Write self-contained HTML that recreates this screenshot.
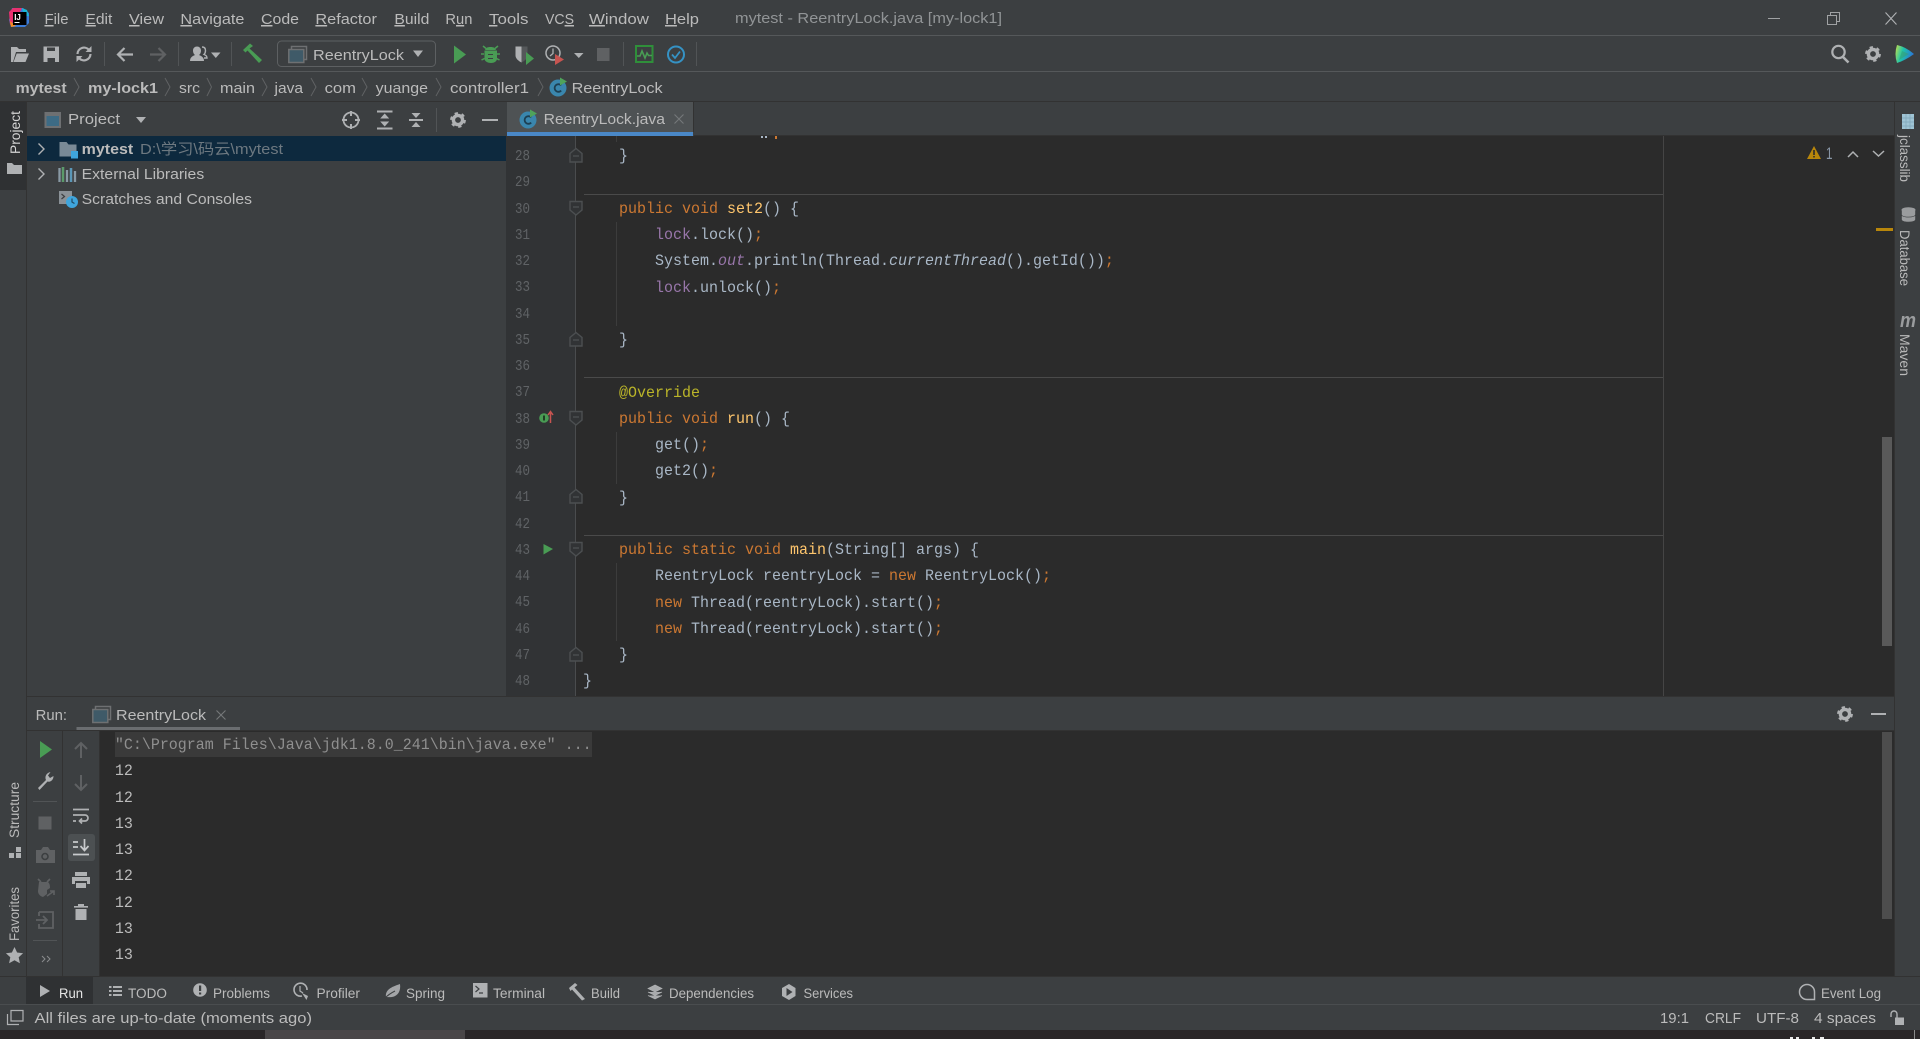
<!DOCTYPE html>
<html><head><meta charset="utf-8"><title>mytest - ReentryLock.java [my-lock1]</title>
<style>
html,body{margin:0;padding:0;background:#3c3f41;overflow:hidden}
svg{display:block}
text{font-family:"Liberation Sans","Noto Sans CJK SC",sans-serif;font-size:15px;fill:#bbbbbb;white-space:pre}
.s13{font-size:13.5px}
.b{font-weight:bold}
.u{text-decoration:underline}
.m text,text.m{font-family:"Liberation Mono",monospace;font-size:16px;fill:#a9b7c6}
.k{fill:#cc7832}.f{fill:#9876aa}.y{fill:#ffc66d}.a{fill:#bbb529}.i{font-style:italic}
.ln text{font-family:"Liberation Mono",monospace;font-size:15px;fill:#606366}
.con text{font-family:"Liberation Mono",monospace;font-size:16px;fill:#bbbbbb}
</style></head><body>
<svg xmlns="http://www.w3.org/2000/svg" width="1920" height="1039" viewBox="0 0 1920 1039">
<defs>
<g id="gear"><circle r="4.6" fill="none" stroke="#afb1b3" stroke-width="3.4"/><circle r="6.6" fill="none" stroke="#afb1b3" stroke-width="2.6" stroke-dasharray="3.2 3.71"/></g>
<g id="cls"><circle r="8.5" fill="#3a86ad"/><path d="M3.2-2.6A3.8 3.8 0 1 0 3.2 2.6" fill="none" stroke="#1d3f52" stroke-width="1.8"/><path d="M2-10.5L9-6.5L2-2.5Z" fill="#4fa35a"/></g>
<g id="cfg"><rect x="3.5" y="-8.5" width="15" height="13" fill="none" stroke="#6e7072" stroke-width="1.5"/><rect x="0.8" y="-5.5" width="15" height="13" fill="#3f5a68" stroke="#6e7072" stroke-width="1.5"/></g>
<path id="fu" d="M-6 7V-1.5L0-6.5L6-1.5V7Z" fill="#313335" stroke="#4c4f51" stroke-width="1.4"/>
<path id="fd" d="M-6-6.5V2L0 7L6 2V-6.5Z" fill="#313335" stroke="#4c4f51" stroke-width="1.4"/>
<linearGradient id="tb" x1="0" y1="0" x2="1" y2="0.3"><stop offset="0" stop-color="#c9e04a"/><stop offset=".45" stop-color="#1fc4a8"/><stop offset="1" stop-color="#2a7ad6"/></linearGradient>
</defs>

<rect width="1920" height="1039" fill="#3c3f41"/>
<!-- chrome lines -->
<rect y="35" width="1920" height="1" fill="#55585a"/>
<rect y="71" width="1920" height="1" fill="#55585a"/>
<rect y="101" width="1920" height="1" fill="#323232"/>

<!-- logo -->
<path d="M12 8L23 8L29 13L29 23L25 27L11 27L9 20Z" fill="#3b7bd8"/>
<path d="M9 12L13 8L22 8L16 20L10 25Z" fill="#e8316f"/>
<path d="M22 8L27 10L29 16L24 16Z" fill="#19b6d6"/>
<path d="M10 21L16 26L11 27Z" fill="#f58a1f"/>
<rect x="13" y="12" width="13.5" height="13" fill="#000"/>
<text x="14.2" y="20" style="font-size:8px;font-weight:bold;fill:#fff">IJ</text>
<rect x="14.5" y="22" width="5" height="1" fill="#fff"/>

<!-- menu -->
<g>
<text x="44.5" y="24" textLength="24" lengthAdjust="spacingAndGlyphs"><tspan class="u">F</tspan>ile</text>
<text x="85.4" y="24" textLength="27" lengthAdjust="spacingAndGlyphs"><tspan class="u">E</tspan>dit</text>
<text x="129" y="24" textLength="35" lengthAdjust="spacingAndGlyphs"><tspan class="u">V</tspan>iew</text>
<text x="180.4" y="24" textLength="64" lengthAdjust="spacingAndGlyphs"><tspan class="u">N</tspan>avigate</text>
<text x="261" y="24" textLength="38" lengthAdjust="spacingAndGlyphs"><tspan class="u">C</tspan>ode</text>
<text x="315.4" y="24" textLength="61.5" lengthAdjust="spacingAndGlyphs"><tspan class="u">R</tspan>efactor</text>
<text x="394.4" y="24" textLength="35" lengthAdjust="spacingAndGlyphs"><tspan class="u">B</tspan>uild</text>
<text x="445.4" y="24" textLength="27" lengthAdjust="spacingAndGlyphs">R<tspan class="u">u</tspan>n</text>
<text x="489" y="24" textLength="39.5" lengthAdjust="spacingAndGlyphs"><tspan class="u">T</tspan>ools</text>
<text x="545" y="24" textLength="29" lengthAdjust="spacingAndGlyphs">VC<tspan class="u">S</tspan></text>
<text x="589" y="24" textLength="60" lengthAdjust="spacingAndGlyphs"><tspan class="u">W</tspan>indow</text>
<text x="665" y="24" textLength="34" lengthAdjust="spacingAndGlyphs"><tspan class="u">H</tspan>elp</text>
<text x="735" y="23" textLength="267" lengthAdjust="spacingAndGlyphs" style="fill:#919496">mytest - ReentryLock.java [my-lock1]</text>
</g>
<!-- window buttons -->
<rect x="1768" y="18" width="12" height="1" fill="#a0a2a4"/>
<path d="M1827.5 15.5h9v9h-9zM1830.5 15.5v-3h9v9h-3" fill="none" stroke="#a0a2a4"/>
<path d="M1885.5 12.5l11 12M1896.5 12.5l-11 12" stroke="#b0b2b4" stroke-width="1.1" fill="none"/>

<!-- toolbar -->
<path d="M11 62V47h6l2 2h7v3H16l-3 10zM13.5 62l3.2-8.5H29L25.5 62z" fill="#afb1b3"/>
<path d="M43.5 46.5h15.5v15.5h-15.5z" fill="#afb1b3"/>
<path d="M47 47.500h8v3.500h-8zM47.500 58h7.500v4h-7.500z" fill="#3c3f41"/>
<path d="M77.500 54a6.500 6.500 0 0 1 11.500-4M90.500 54a6.500 6.500 0 0 1-11.500 4" fill="none" stroke="#afb1b3" stroke-width="2.200"/>
<path d="M91.500 46v6h-6zM76.500 62v-6h6z" fill="#afb1b3"/>
<rect x="104" y="42" width="1" height="24" fill="#515456"/>
<path d="M133 54.500h-14M124.500 48l-6.500 6.500l6.500 6.500" fill="none" stroke="#afb1b3" stroke-width="2.200"/>
<path d="M150 54.500h14M158.500 48l6.500 6.500l-6.500 6.500" fill="none" stroke="#5f6163" stroke-width="2.200"/>
<rect x="178" y="42" width="1" height="24" fill="#515456"/>
<path d="M190 61c0-4 3-5 5-6c-1.500-1-2-3-2-4.500c0-2.500 1.800-4 4-4s4 1.500 4 4c0 1.500-.5 3.500-2 4.500c2 1 5 2 5 6z" fill="#afb1b3"/>
<path d="M202 47c2.500 0 3.500 1.500 3.500 3.500c0 1.500-.5 3-1.500 4c1.500.5 3 1.500 3 3.500h-3" fill="none" stroke="#afb1b3" stroke-width="1.400"/>
<path d="M211 52.500h9.500l-4.700 5.500z" fill="#afb1b3"/>
<rect x="231" y="42" width="1" height="24" fill="#515456"/>
<path d="M243 50l7-6.500l3 2.500l-3.500 2.500L262 60l-3 3L247.500 50.500l-2 2z" fill="#499c54"/>
<rect x="277.500" y="41" width="158" height="25.500" rx="4" fill="none" stroke="#5d6062"/>
<use href="#cfg" x="288" y="55"/>
<text x="313" y="60" textLength="91" lengthAdjust="spacingAndGlyphs">ReentryLock</text>
<path d="M413 50.500h10l-5 6.500z" fill="#afb1b3"/>
<path d="M454 45.500L466 54.500L454 63.500z" fill="#499c54"/>
<g fill="#499c54"><path d="M485 50c1-2 2-3 5.500-3s4.500 1 5.500 3zM484.500 50.500h12.500v8c0 3-3 4.500-6 4.500s-6.500-1.500-6.500-4.500z"/><path d="M483 46l3 2.500M498 46l-3 2.500M481 54h3M497 54h3M481.500 60l3-1.500M499.500 60l-3-1.500" stroke="#499c54" stroke-width="1.500"/><rect x="488" y="54" width="5" height="1" fill="#3c3f41"/><rect x="488" y="58" width="5" height="1" fill="#3c3f41"/></g>
<path d="M515.500 46.500h6v16c-3-1.500-6-4-6-7z" fill="#afb1b3"/><path d="M521.500 46.500h6v9c0 3-3 5.500-6 7z" fill="#55585a"/>
<path d="M526 52L534 58.500L526 65z" fill="#499c54"/>
<circle cx="553" cy="53" r="7" fill="none" stroke="#afb1b3" stroke-width="1.500"/><path d="M553 48.500v5l-3 2.500" fill="none" stroke="#afb1b3" stroke-width="1.300"/>
<path d="M555 54L564 59.500L555 65z" fill="#c75450"/>
<path d="M574 53h9.500l-4.700 5z" fill="#afb1b3"/>
<rect x="597" y="48" width="12.500" height="13" fill="#5f6163"/>
<rect x="623" y="42" width="1" height="24" fill="#515456"/>
<rect x="636" y="46" width="16.500" height="16" fill="none" stroke="#2f8f3a" stroke-width="2"/>
<path d="M637 56h3l2-5l3 7l2-5l1.500 2.500H652" fill="none" stroke="#499c54" stroke-width="1.600"/>
<circle cx="676" cy="54.500" r="8" fill="none" stroke="#3592c4" stroke-width="2"/>
<path d="M672 54.500l3 3.500l5-6.500" fill="none" stroke="#3592c4" stroke-width="1.800"/>
<rect x="696" y="42" width="1" height="24" fill="#515456"/>
<circle cx="1838.500" cy="52" r="6.200" fill="none" stroke="#afb1b3" stroke-width="2.200"/>
<path d="M1843 57l5.500 5.500" stroke="#afb1b3" stroke-width="2.600"/>
<use href="#gear" x="1873" y="54"/>
<path d="M1897 45Q1906 47 1914 54Q1906 60 1897 63Q1894 54 1897 45Z" fill="url(#tb)"/>
<path d="M1902 51L1909 54L1899 60Z" fill="#3c9a6a" opacity=".5"/>

<!-- breadcrumbs -->
<g>
<text class="b" x="15.600" y="93" textLength="51" lengthAdjust="spacingAndGlyphs">mytest</text>
<text class="b" x="88" y="93" textLength="70" lengthAdjust="spacingAndGlyphs">my-lock1</text>
<text x="179" y="93" textLength="21" lengthAdjust="spacingAndGlyphs">src</text>
<text x="220" y="93" textLength="35" lengthAdjust="spacingAndGlyphs">main</text>
<text x="274.500" y="93" textLength="28.500" lengthAdjust="spacingAndGlyphs">java</text>
<text x="324.600" y="93" textLength="31.400" lengthAdjust="spacingAndGlyphs">com</text>
<text x="375.600" y="93" textLength="52.400" lengthAdjust="spacingAndGlyphs">yuange</text>
<text x="450" y="93" textLength="79" lengthAdjust="spacingAndGlyphs">controller1</text>
<text x="571.600" y="93" textLength="91" lengthAdjust="spacingAndGlyphs">ReentryLock</text>
</g>
<g fill="none" stroke="#606264" stroke-width="1">
<path d="M74 78l5 9l-5 9M165 78l5 9l-5 9M207 78l4.500 9l-4.500 9M262 78l5 9l-5 9M311 78l5 9l-5 9M362 78l5 9l-5 9M436 78l5 9l-5 9M538 78l5 9l-5 9"/>
</g>
<use href="#cls" x="558" y="88"/>

<!-- left strip -->
<rect x="26" y="102" width="1" height="874" fill="#323232"/>
<rect y="102" width="26" height="88" fill="#2f3133"/>
<text class="s13" transform="translate(20,154) rotate(-90)" textLength="43" lengthAdjust="spacingAndGlyphs" style="fill:#d4d4d4">Project</text>
<path d="M7 174V163h5l2 2h8v9z" fill="#afb1b3"/>
<text class="s13" transform="translate(19,838) rotate(-90)" textLength="56" lengthAdjust="spacingAndGlyphs">Structure</text>
<path d="M9 853h5v5H9zM16 853h5v5h-5zM16 847h5v5h-5z" fill="#afb1b3"/>
<text class="s13" transform="translate(19,941) rotate(-90)" textLength="54" lengthAdjust="spacingAndGlyphs">Favorites</text>
<path d="M14.500 947l2.600 5.500l6 .7l-4.400 4l1.200 6l-5.400-3l-5.400 3l1.200-6l-4.400-4l6-.7z" fill="#afb1b3"/>

<!-- project panel header -->
<rect x="44.500" y="112" width="16.500" height="16" fill="#6e7072"/>
<rect x="46.500" y="116" width="12.500" height="10" fill="#3d6b85"/>
<text x="68" y="124" textLength="52" lengthAdjust="spacingAndGlyphs">Project</text>
<path d="M136 117h10l-5 6z" fill="#afb1b3"/>
<circle cx="351" cy="120" r="7.500" fill="none" stroke="#afb1b3" stroke-width="1.800"/>
<path d="M351 111v5M351 124v5M342 120h5M355 120h5" stroke="#afb1b3" stroke-width="2"/>
<path d="M377 111.500h15.500M377 128.500h15.500" stroke="#afb1b3" stroke-width="2"/>
<path d="M384.700 113.500l4.500 5h-9zM384.700 126.500l4.500-5h-9z" fill="#afb1b3"/>
<path d="M409 120h14" stroke="#afb1b3" stroke-width="2"/>
<path d="M416 118l4.500-5h-9zM416 122l4.500 5h-9z" fill="#afb1b3"/>
<rect x="436" y="108" width="1" height="24" fill="#515456"/>
<use href="#gear" x="458" y="120"/>
<rect x="482" y="119" width="16" height="2" fill="#afb1b3"/>

<!-- tree -->
<rect x="27" y="136" width="479" height="25" fill="#0d293e"/>
<path d="M38.500 143.500l5.500 5.500l-5.500 5.500M38.500 168.500l5.500 5.500l-5.500 5.500" fill="none" stroke="#afb1b3" stroke-width="1.400"/>
<path d="M59.500 142h7l2 2.500h8v12h-17z" fill="#7a8a96"/>
<rect x="71" y="151" width="7" height="7.500" fill="#3fa5dc"/>
<text class="b" x="81.700" y="154" textLength="51.500" lengthAdjust="spacingAndGlyphs">mytest</text>
<text x="140" y="154" textLength="143" lengthAdjust="spacingAndGlyphs" style="fill:#6d7880">D:\学习\码云\mytest</text>
<path d="M59.500 168v14M63 167v15M67 170v12M71 168v14M75 171v11" stroke="#8a9aa5" stroke-width="2.300"/>
<path d="M63 167v15" stroke="#5b9a6a" stroke-width="2.300"/><path d="M71 168v14" stroke="#5a97b8" stroke-width="2.300"/>
<text x="81.700" y="179" textLength="122.500" lengthAdjust="spacingAndGlyphs">External Libraries</text>
<rect x="59" y="191" width="13" height="13" fill="#8a9197"/>
<path d="M61.500 194l3 2.500l-3 2.500" fill="none" stroke="#3c3f41" stroke-width="1.200"/>
<circle cx="72" cy="202" r="6" fill="#3fa5dc"/><path d="M72 198.500v3.500l2.500 1.500" stroke="#1f4a63" fill="none" stroke-width="1.200"/>
<text x="81.700" y="204" textLength="170.300" lengthAdjust="spacingAndGlyphs">Scratches and Consoles</text>

<!-- tab -->
<rect x="507" y="102" width="186" height="30" fill="#4e5254"/>
<rect x="507" y="132" width="186" height="4" fill="#4a88c7"/>
<rect x="693" y="102" width="1" height="30" fill="#323232"/>
<use href="#cls" x="528" y="120"/>
<text x="543.600" y="124" textLength="121.400" lengthAdjust="spacingAndGlyphs">ReentryLock.java</text>
<path d="M674.500 114.500l9 9M683.500 114.500l-9 9" stroke="#75787a" stroke-width="1.100"/>
<rect x="694" y="102" width="1200" height="33" fill="#3c3f41"/>
<rect x="694" y="135" width="1200" height="1" fill="#323232"/>

<!-- editor -->
<rect x="506" y="136" width="1388" height="561" fill="#2b2b2b"/>
<rect x="506" y="136" width="70" height="561" fill="#313335"/>
<rect x="575" y="136" width="1" height="561" fill="#4a4c4e"/>
<rect x="1663" y="136" width="1" height="561" fill="#454545"/>
<rect x="584" y="194" width="1079" height="1" fill="#4a4a4a"/>
<rect x="584" y="377" width="1079" height="1" fill="#4a4a4a"/>
<rect x="584" y="535" width="1079" height="1" fill="#4a4a4a"/>
<path d="M616.500 136v6M616.500 222v104M616.500 432v52M616.500 563v78" stroke="#3c3c3c" fill="none"/>
<path d="M761 136h2v2h-2zM765 136h2v2h-2z" fill="#a9b7c6"/><rect x="775" y="136" width="2" height="3" fill="#cc7832"/>

<g class="ln" transform="translate(0,-1)">
<text x="515" y="161" textLength="15" lengthAdjust="spacingAndGlyphs">28</text>
<text x="515" y="187" textLength="15" lengthAdjust="spacingAndGlyphs">29</text>
<text x="515" y="214" textLength="15" lengthAdjust="spacingAndGlyphs">30</text>
<text x="515" y="240" textLength="15" lengthAdjust="spacingAndGlyphs">31</text>
<text x="515" y="266" textLength="15" lengthAdjust="spacingAndGlyphs">32</text>
<text x="515" y="292" textLength="15" lengthAdjust="spacingAndGlyphs">33</text>
<text x="515" y="319" textLength="15" lengthAdjust="spacingAndGlyphs">34</text>
<text x="515" y="345" textLength="15" lengthAdjust="spacingAndGlyphs">35</text>
<text x="515" y="371" textLength="15" lengthAdjust="spacingAndGlyphs">36</text>
<text x="515" y="397" textLength="15" lengthAdjust="spacingAndGlyphs">37</text>
<text x="515" y="424" textLength="15" lengthAdjust="spacingAndGlyphs">38</text>
<text x="515" y="450" textLength="15" lengthAdjust="spacingAndGlyphs">39</text>
<text x="515" y="476" textLength="15" lengthAdjust="spacingAndGlyphs">40</text>
<text x="515" y="502" textLength="15" lengthAdjust="spacingAndGlyphs">41</text>
<text x="515" y="529" textLength="15" lengthAdjust="spacingAndGlyphs">42</text>
<text x="515" y="555" textLength="15" lengthAdjust="spacingAndGlyphs">43</text>
<text x="515" y="581" textLength="15" lengthAdjust="spacingAndGlyphs">44</text>
<text x="515" y="607" textLength="15" lengthAdjust="spacingAndGlyphs">45</text>
<text x="515" y="634" textLength="15" lengthAdjust="spacingAndGlyphs">46</text>
<text x="515" y="660" textLength="15" lengthAdjust="spacingAndGlyphs">47</text>
<text x="515" y="686" textLength="15" lengthAdjust="spacingAndGlyphs">48</text>
</g>

<!-- fold markers -->
<g transform="translate(.5,-1)">
<use href="#fu" x="575.500" y="156"/><use href="#fd" x="575.500" y="209"/><use href="#fu" x="575.500" y="340"/>
<use href="#fd" x="575.500" y="419"/><use href="#fu" x="575.500" y="497"/><use href="#fd" x="575.500" y="550"/><use href="#fu" x="575.500" y="655"/>
<path d="M572.500 157h6M572.500 208h6M572.500 341h6M572.500 418h6M572.500 498h6M572.500 549h6M572.500 656h6" stroke="#55585a"/>
</g>

<!-- gutter icons -->
<circle cx="544" cy="418" r="4.800" fill="#499c54"/>
<rect x="543" y="415.500" width="2" height="5" fill="#1f3d24"/>
<path d="M550.500 423v-11M548 415l2.500-3.500l2.500 3.500" stroke="#c75450" stroke-width="1.500" fill="none"/>
<path d="M543.500 544L553 549L543.500 554.500z" fill="#499c54"/>

<!-- code -->
<g class="m" transform="translate(.6,-1) scale(.9375 1)">
<text x="659.700" y="161">}</text>
<text x="659.700" y="214"><tspan class="k">public void </tspan><tspan class="y">set2</tspan>() {</text>
<text x="698.100" y="240"><tspan class="f">lock</tspan>.lock()<tspan class="k">;</tspan></text>
<text x="698.100" y="266">System.<tspan class="f i">out</tspan>.println(Thread.<tspan class="i">currentThread</tspan>().getId())<tspan class="k">;</tspan></text>
<text x="698.100" y="293"><tspan class="f">lock</tspan>.unlock()<tspan class="k">;</tspan></text>
<text x="659.700" y="345">}</text>
<text x="659.700" y="398"><tspan class="a">@Override</tspan></text>
<text x="659.700" y="424"><tspan class="k">public void </tspan><tspan class="y">run</tspan>() {</text>
<text x="698.100" y="450">get()<tspan class="k">;</tspan></text>
<text x="698.100" y="476">get2()<tspan class="k">;</tspan></text>
<text x="659.700" y="503">}</text>
<text x="659.700" y="555"><tspan class="k">public static void </tspan><tspan class="y">main</tspan>(String[] args) {</text>
<text x="698.100" y="581">ReentryLock reentryLock = <tspan class="k">new </tspan>ReentryLock()<tspan class="k">;</tspan></text>
<text x="698.100" y="608"><tspan class="k">new </tspan>Thread(reentryLock).start()<tspan class="k">;</tspan></text>
<text x="698.100" y="634"><tspan class="k">new </tspan>Thread(reentryLock).start()<tspan class="k">;</tspan></text>
<text x="659.700" y="660">}</text>
<text x="621.300" y="686">}</text>
</g>

<!-- inspections -->
<path d="M1814 146L1821 159H1807Z" fill="#b8860b"/>
<rect x="1813.200" y="150" width="1.600" height="5" fill="#2b2b2b"/><rect x="1813.200" y="156" width="1.600" height="1.500" fill="#2b2b2b"/>
<text x="1826" y="159" textLength="6.500" lengthAdjust="spacingAndGlyphs" style="fill:#8a98a8;font-size:17px">1</text>
<path d="M1848 157l5-5l5 5M1873 151l5.500 5l5.500-5" fill="none" stroke="#afb1b3" stroke-width="1.500"/>
<rect x="1876" y="228" width="17" height="3" fill="#b8860b"/>
<rect x="1882" y="437" width="10" height="209" fill="#595959"/>

<!-- right strip -->
<rect x="1894" y="102" width="1" height="874" fill="#323232"/>
<rect x="1902" y="114" width="12" height="15" fill="#9fc4d4"/>
<path d="M1902 118h12M1902 122h12M1902 126h12M1906 114v15M1910 114v15" stroke="#7fa5b8" stroke-width=".7"/>
<text class="s13" transform="translate(1900,135) rotate(90)" textLength="47" lengthAdjust="spacingAndGlyphs">jclasslib</text>
<ellipse cx="1908.500" cy="210" rx="7" ry="2.800" fill="#9a9c9e"/>
<path d="M1901.500 211v3.500c0 1.500 3 2.600 7 2.600s7-1.100 7-2.600V211M1901.500 216v3.500c0 1.500 3 2.600 7 2.600s7-1.100 7-2.600V216" fill="#9a9c9e" stroke="#3c3f41" stroke-width=".6"/>
<text class="s13" transform="translate(1900,230) rotate(90)" textLength="56" lengthAdjust="spacingAndGlyphs">Database</text>
<text x="1900" y="327" class="b i" textLength="16" lengthAdjust="spacingAndGlyphs" style="font-size:20px;fill:#9a9c9e">m</text>
<text class="s13" transform="translate(1900,334) rotate(90)" textLength="42" lengthAdjust="spacingAndGlyphs">Maven</text>

<!-- run panel header -->
<rect x="27" y="697" width="1867" height="33" fill="#3c3f41"/>
<rect x="27" y="696" width="1867" height="1" fill="#323232"/>
<text x="35.600" y="720" textLength="31.400" lengthAdjust="spacingAndGlyphs">Run:</text>
<use href="#cfg" x="92" y="715"/>
<text x="116" y="720" textLength="90" lengthAdjust="spacingAndGlyphs">ReentryLock</text>
<path d="M216.500 710.500l9 9M225.500 710.500l-9 9" stroke="#75787a" stroke-width="1.100"/>
<rect x="76.500" y="727" width="163.500" height="4" fill="#6a6d70"/>
<use href="#gear" x="1845" y="714"/>
<rect x="1871" y="713" width="15" height="2" fill="#afb1b3"/>
<rect x="27" y="730" width="1867" height="1" fill="#323232"/>

<!-- run toolbars -->
<rect x="62" y="731" width="1" height="245" fill="#323232"/>
<rect x="99" y="731" width="1" height="245" fill="#323232"/>
<path d="M40 741L52 749.500L40 758z" fill="#499c54"/>
<path d="M38 788l8-8c-1.500-3 0-7 4.500-8l-2.500 3.500l2 2.500l3.500-2c0 4-3 6.500-6 5.500l-8 8.500z" fill="#afb1b3"/>
<rect x="33" y="801" width="24" height="1" fill="#515456"/>
<rect x="38.500" y="816.500" width="13" height="13" fill="#5f6163"/>
<path d="M36 850h5l2-3h5l2 3h5v13H36z" fill="#5f6163"/><circle cx="45" cy="856.500" r="3" fill="none" stroke="#3c3f41" stroke-width="1.600"/>
<path d="M39 882h9c2 2 2 4 2 6l-3 2v4l-4 3c-3-1-5-3-5-6z" fill="#5f6163"/><path d="M38 879l3 3M50 879l-3 3M47 896l7-5M50 891h4v4" stroke="#5f6163" stroke-width="1.600" fill="none"/>
<path d="M39 912h14v16H39v-4M39 916v-4M36 920h10M43 916l4 4l-4 4" fill="none" stroke="#5f6163" stroke-width="1.800"/>
<rect x="33" y="940" width="24" height="1" fill="#515456"/>
<path d="M42 962l3-3l-3-3M47 962l3-3l-3-3" fill="none" stroke="#8a8c8e" stroke-width="1"/>
<path d="M81 758v-15M75 749l6-6l6 6" fill="none" stroke="#5f6163" stroke-width="2"/>
<path d="M81 775v15M75 784l6 6l6-6" fill="none" stroke="#5f6163" stroke-width="2"/>
<path d="M73 809.500h16M73 815h12a3 3 0 0 1 0 6h-5M82 818.500l-2.500 2.500l2.500 2.500M73 821h3" fill="none" stroke="#afb1b3" stroke-width="1.700"/>
<rect x="68" y="834" width="27" height="27" rx="3" fill="#4c5052"/>
<path d="M73 842h5M73 847h5M73 854.500h16M84.500 839v11M80.500 846l4 4.500l4-4.500" fill="none" stroke="#c8cacc" stroke-width="1.700"/>
<path d="M75 872h12v4H75zM72 877h18v7h-3v-3H75v3h-3zM76 883h10v5H76z" fill="#afb1b3"/>
<path d="M74 906h14v1.600H74zM78 904h6v2h-6zM75.500 909h11v11h-11z" fill="#afb1b3"/>

<!-- console -->
<rect x="100" y="731" width="1794" height="245" fill="#2b2b2b"/>
<rect x="115" y="732" width="477" height="25" fill="#3a3a3a"/>
<rect x="1882" y="732" width="10" height="187" fill="#4d4d4d"/>
<g class="con"><g transform="scale(.9375 1)">
<text x="122.500" y="749" style="fill:#8f8f8f">"C:\Program Files\Java\jdk1.8.0_241\bin\java.exe" ...</text>
<text x="122.500" y="775">12</text>
<text x="122.500" y="802">12</text>
<text x="122.500" y="828">13</text>
<text x="122.500" y="854">13</text>
<text x="122.500" y="880">12</text>
<text x="122.500" y="907">12</text>
<text x="122.500" y="933">13</text>
<text x="122.500" y="959">13</text>
</g></g>

<!-- bottom tool bar -->
<rect y="976" width="1920" height="1" fill="#323232"/>
<rect x="26" y="977" width="67" height="27" fill="#2f3133"/>
<path d="M40 985L50 991L40 997z" fill="#afb1b3"/>
<g class="s">
<text class="s13" x="59" y="998" textLength="24" lengthAdjust="spacingAndGlyphs" style="fill:#e6e6e6">Run</text>
<text class="s13" x="128" y="998" textLength="39" lengthAdjust="spacingAndGlyphs">TODO</text>
<text class="s13" x="213" y="998" textLength="57" lengthAdjust="spacingAndGlyphs">Problems</text>
<text class="s13" x="316.500" y="998" textLength="43.500" lengthAdjust="spacingAndGlyphs">Profiler</text>
<text class="s13" x="406" y="998" textLength="39" lengthAdjust="spacingAndGlyphs">Spring</text>
<text class="s13" x="493" y="998" textLength="52" lengthAdjust="spacingAndGlyphs">Terminal</text>
<text class="s13" x="591" y="998" textLength="29" lengthAdjust="spacingAndGlyphs">Build</text>
<text class="s13" x="669" y="998" textLength="85" lengthAdjust="spacingAndGlyphs">Dependencies</text>
<text class="s13" x="803.500" y="998" textLength="49.500" lengthAdjust="spacingAndGlyphs">Services</text>
<text class="s13" x="1821" y="998" textLength="60" lengthAdjust="spacingAndGlyphs">Event Log</text>
</g>
<path d="M109 986h2.500v2H109zM113 986h9v2h-9zM109 990h2.500v2H109zM113 990h9v2h-9zM109 994h2.500v2H109zM113 994h9v2h-9z" fill="#afb1b3"/>
<circle cx="200" cy="990" r="6.800" fill="#afb1b3"/><rect x="199" y="985.500" width="2.200" height="5.500" fill="#3c3f41"/><rect x="199" y="992.500" width="2.200" height="2" fill="#3c3f41"/>
<path d="M302 996a6.500 6.500 0 1 1 5-6" fill="none" stroke="#afb1b3" stroke-width="1.600"/><path d="M300 986v5l3 2" fill="none" stroke="#afb1b3" stroke-width="1.200"/><path d="M302 993l6 3l-1.500 4z" fill="#afb1b3"/>
<path d="M386 997c-1-7 5-10 14-13c1 7-2 12-8 13c-2 .3-4 0-6 0z" fill="#a3a5a7"/><path d="M385 998c3-3 6-5 10-7" stroke="#3c3f41" fill="none"/>
<rect x="473" y="983" width="14.500" height="14.500" fill="#afb1b3"/><path d="M475.500 986l3.500 3l-3.500 3M479 993h4" fill="none" stroke="#3c3f41" stroke-width="1.200"/>
<path d="M569 988l6-5l2.500 2l-3 2.500L585 999l-3 1.500L572 989.500l-1.500 1.500z" fill="#afb1b3"/>
<path d="M655 985l7 3.500l-7 3.500l-7-3.500zM648 992l7 3.500l7-3.500M648 995.500l7 3.500l7-3.500" fill="#afb1b3" stroke="#afb1b3" stroke-width=".7" fill-opacity=".95"/>
<path d="M789 984l6.500 4v8L789 1000l-7-4v-8z" fill="#afb1b3"/><path d="M786.500 988l6 4l-6 4z" fill="#3c3f41"/>
<path d="M1807 984.500a7.500 7.500 0 0 1 7.500 7.500v7.500H1807a7.500 7.500 0 0 1 0-15z" fill="none" stroke="#afb1b3" stroke-width="1.500"/>

<!-- status bar -->
<rect y="1004" width="1920" height="1" fill="#4a4d4f"/>
<path d="M7.500 1014v10.500H19M11 1010.500h12v10.500H11z" fill="none" stroke="#afb1b3" stroke-width="1.200"/>
<text x="34.500" y="1023" textLength="277.500" lengthAdjust="spacingAndGlyphs">All files are up-to-date (moments ago)</text>
<text x="1660" y="1023" textLength="29" lengthAdjust="spacingAndGlyphs">19:1</text>
<text x="1705" y="1023" textLength="36" lengthAdjust="spacingAndGlyphs">CRLF</text>
<text x="1756" y="1023" textLength="43" lengthAdjust="spacingAndGlyphs">UTF-8</text>
<text x="1814" y="1023" textLength="62" lengthAdjust="spacingAndGlyphs">4 spaces</text>
<rect x="1895" y="1017.500" width="9" height="7.500" fill="#afb1b3"/>
<path d="M1891 1017v-3a3 3 0 0 1 6 0v3.500" fill="none" stroke="#afb1b3" stroke-width="1.400"/>

<!-- taskbar -->
<rect y="1030" width="1920" height="9" fill="#2a2628"/>
<rect x="265" y="1030" width="200" height="9" fill="#4a4648"/>
<rect x="1790" y="1037" width="3" height="2" fill="#e8e8e8"/><rect x="1796" y="1037" width="3" height="2" fill="#e8e8e8"/><rect x="1812" y="1037" width="3" height="2" fill="#e8e8e8"/><rect x="1820" y="1037" width="4" height="2" fill="#e8e8e8"/>
<rect x="1914" y="1030" width="1" height="9" fill="#8a8a8a"/>
</svg>
</body></html>
